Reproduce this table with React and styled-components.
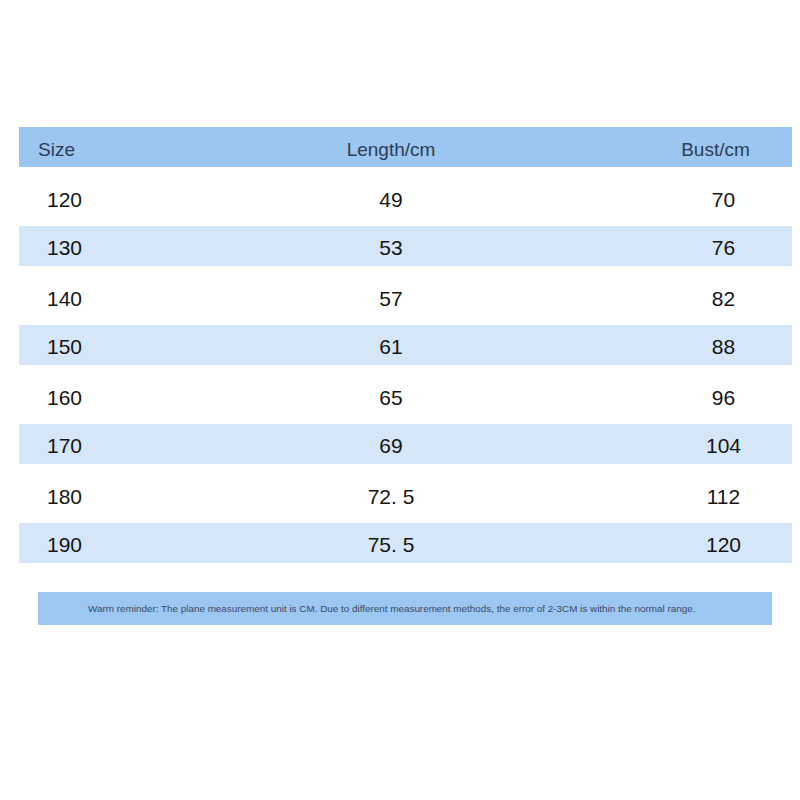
import React from "react";
import styled, { createGlobalStyle } from "styled-components";

const GlobalStyle = createGlobalStyle`
  body {
    margin: 0;
    background: #ffffff;
    font-family: "Liberation Sans", Arial, sans-serif;
  }
`;

const Page = styled.div`
  width: 800px;
  height: 800px;
  padding: 127px 0 0 19px;
  box-sizing: border-box;
  background: #ffffff;
`;

const Table = styled.div`
  width: 773px;
  display: flex;
  flex-direction: column;
`;

const Row = styled.div`
  display: grid;
  grid-template-columns: 248px 248px 1fr;
  align-items: center;
  height: ${(p) => (p.$tall ? "59px" : "40px")};
  background: ${(p) => p.$bg};
`;

const HeaderCell = styled.div`
  font-size: 19px;
  color: #2c3d58;
  padding-top: 6px;
  text-align: ${(p) => p.$align || "center"};
  padding-left: ${(p) => p.$pad || 0}px;
`;

const Cell = styled.div`
  font-size: 21px;
  color: #151515;
  padding-top: ${(p) => (p.$tall ? 7 : 4)}px;
  text-align: ${(p) => p.$align || "center"};
  padding-left: ${(p) => p.$pad || 0}px;
`;

const Reminder = styled.div`
  margin: 29px 0 0 19px;
  width: 734px;
  height: 33px;
  background: #9cc7f0;
  display: flex;
  align-items: center;
  padding-left: 50px;
  box-sizing: border-box;
  font-size: 9.9px;
  color: #3a4966;
`;

const rows = [
  ["120", "49", "70"],
  ["130", "53", "76"],
  ["140", "57", "82"],
  ["150", "61", "88"],
  ["160", "65", "96"],
  ["170", "69", "104"],
  ["180", "72. 5", "112"],
  ["190", "75. 5", "120"],
];

export default function App() {
  return (
    <Page>
      <GlobalStyle />
      <Table>
        <Row $bg="#9ac6ef">
          <HeaderCell $align="left" $pad={19}>Size</HeaderCell>
          <HeaderCell>Length/cm</HeaderCell>
          <HeaderCell $pad={124}>Bust/cm</HeaderCell>
        </Row>
        {rows.map((r, i) => {
          const tall = i % 2 === 0;
          return (
            <Row key={r[0]} $tall={tall} $bg={tall ? "#ffffff" : "#d4e6f8"}>
              <Cell $tall={tall} $align="left" $pad={28}>{r[0]}</Cell>
              <Cell $tall={tall}>{r[1]}</Cell>
              <Cell $tall={tall} $pad={140}>{r[2]}</Cell>
            </Row>
          );
        })}
      </Table>
      <Reminder>
        Warm reminder: The plane measurement unit is CM. Due to different measurement methods, the error of 2-3CM is within the normal range.
      </Reminder>
    </Page>
  );
}
